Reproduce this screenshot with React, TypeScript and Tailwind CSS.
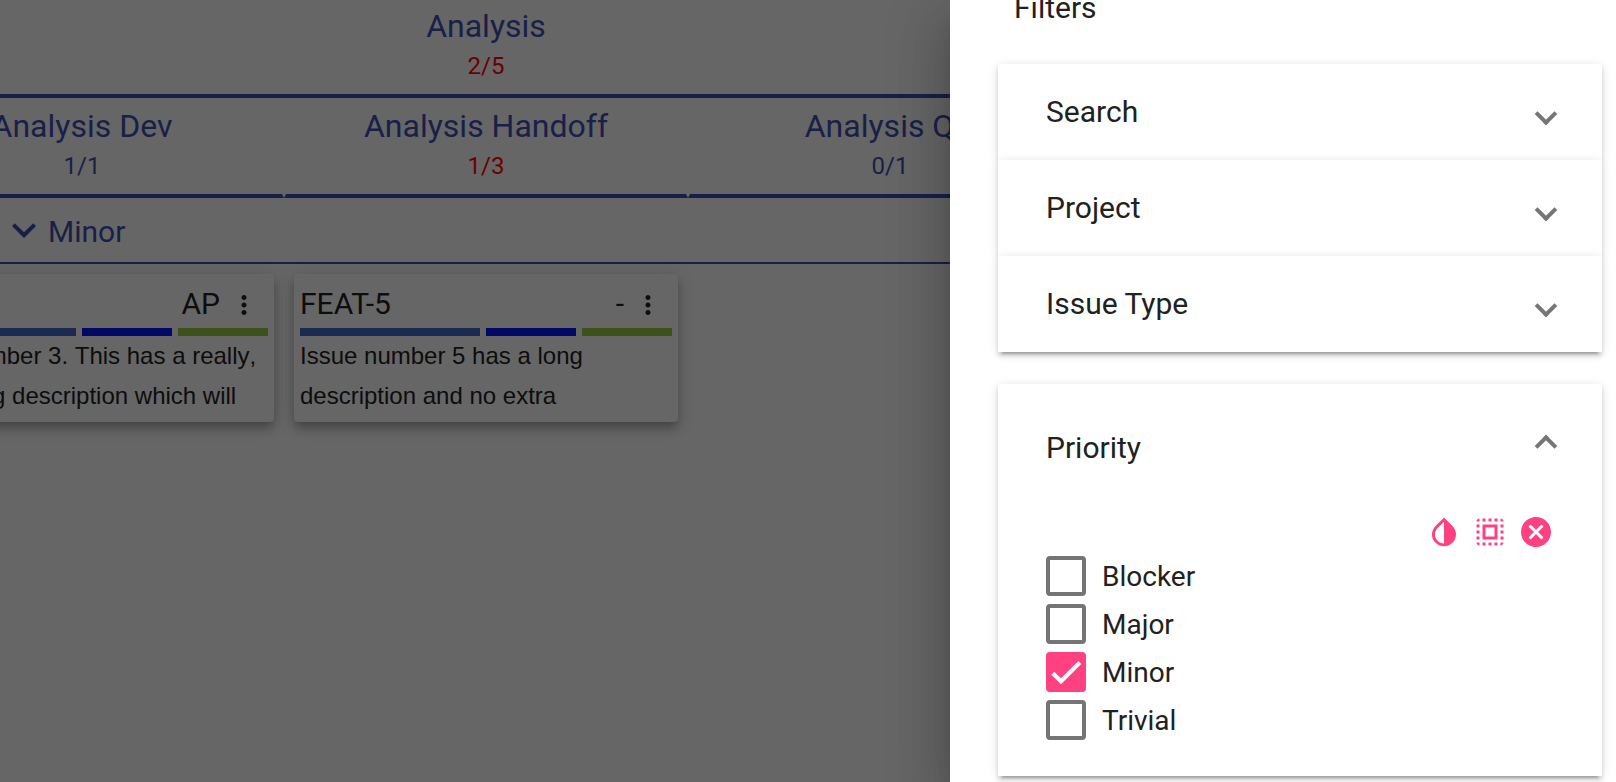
import React from "react";
import { MdCancel, MdMoreVert, MdSelectAll } from "react-icons/md";

type Tone = "ok" | "over";

function StateHeader({ name, count, tone }: { name: string; count: string; tone: Tone }) {
  return (
    <div className="h-[100px] w-full shrink-0 border-x-2 border-b-4 border-x-transparent border-b-[#192048] text-center text-[#192048]">
      <div className="pt-[9px] text-[32px] leading-[38px]">{name}</div>
      <div
        className={
          tone === "over"
            ? "pt-[7px] text-[24px] leading-[28px] text-[#6b0000]"
            : "pt-[7px] text-[24px] leading-[28px]"
        }
      >
        {count}
      </div>
    </div>
  );
}

function IssueCard({ issueKey, assignee, lines }: { issueKey: string; assignee: string; lines: string[] }) {
  return (
    <div className="h-[148px] w-[384px] rounded-[4px] bg-[#666666] px-[6px] text-[#0d0d0d] shadow-[0_4px_8px_-2px_rgba(0,0,0,0.2),0_8px_10px_0_rgba(0,0,0,0.14),0_2px_20px_0_rgba(0,0,0,0.12)]">
      <div className="flex h-[54px] items-center pt-[4px] pr-[9px] text-[30px]">
        <span className="grow">{issueKey}</span>
        <span>{assignee}</span>
        <MdMoreVert className="mt-[4px] ml-[9px] size-[30px]" />
      </div>
      <div className="flex h-[8px] gap-[6px]">
        <div className="w-[180px] bg-[#1c2a50]" />
        <div className="w-[90px] bg-[#020866]" />
        <div className="w-[90px] bg-[#3d521a]" />
      </div>
      <div className="font-['Liberation_Sans',Arial,sans-serif] text-[24px] leading-[40px] whitespace-nowrap [font-kerning:none]">
        {lines.map((line) => (
          <div key={line}>{line}</div>
        ))}
      </div>
    </div>
  );
}

function Board() {
  return (
    <div className="w-[950px] shrink-0 overflow-hidden bg-[#666666]">
      <div className="-ml-[120px] w-[1212px]">
        <div className="-mt-[2px]">
          <StateHeader name="Analysis" count="2/5" tone="over" />
        </div>
        <div className="grid grid-cols-3">
          <StateHeader name="Analysis Dev" count="1/1" tone="ok" />
          <StateHeader name="Analysis Handoff" count="1/3" tone="over" />
          <StateHeader name="Analysis QA" count="0/1" tone="ok" />
        </div>
        <div className="flex h-[66px] items-center border-b-2 border-[#192048] pl-[120px] text-[30px] text-[#192048]">
          <svg viewBox="0 0 24 24" className="size-[48px]" fill="currentColor">
            <path d="M16.59 8.59L12 13.17 7.41 8.59 6 10l6 6 6-6z" />
          </svg>
          <span className="pt-[2px]">Minor</span>
        </div>
        <div className="flex gap-[20px] px-[10px] pt-[10px]">
          <IssueCard
            issueKey="FEAT-3"
            assignee="AP"
            lines={["Issue number 3. This has a really,", "really long description which will"]}
          />
          <IssueCard
            issueKey="FEAT-5"
            assignee="-"
            lines={["Issue number 5 has a long", "description and no extra"]}
          />
        </div>
      </div>
    </div>
  );
}

const PANEL_SHADOW =
  "bg-white shadow-[0_6px_2px_-4px_rgba(0,0,0,0.2),0_4px_4px_0_rgba(0,0,0,0.14),0_2px_10px_0_rgba(0,0,0,0.12)]";

function CollapsedPanel({ title }: { title: string }) {
  return (
    <div className={`${PANEL_SHADOW} flex h-[96px] items-center justify-between pr-[48px] pl-[48px]`}>
      <span className="-mt-[2px] text-[30px]">{title}</span>
      <span className="mt-[3px] size-[16px] rotate-45 border-r-4 border-b-4 border-[#757575]" />
    </div>
  );
}

function Checkbox({ label, checked = false }: { label: string; checked?: boolean }) {
  return (
    <label className="flex h-[48px] items-center gap-[16px] text-[28px]">
      {checked ? (
        <span className="size-[40px] rounded-[4px] bg-[#ff4081]">
          <svg viewBox="0 0 24 24" className="size-[40px]" fill="none" stroke="#fafafa" strokeWidth="2.5">
            <path d="M4.1 12.7L9 17.6 20.3 6.3" />
          </svg>
        </span>
      ) : (
        <span className="size-[40px] rounded-[4px] border-4 border-[#757575]" />
      )}
      <span className="pt-[2px]">{label}</span>
    </label>
  );
}

export default function App() {
  return (
    <div className="flex h-[782px] w-[1616px] overflow-hidden bg-[#666666] font-[Roboto,sans-serif]">
      <Board />
      <aside className="relative w-[666px] shrink-0 bg-white pr-[14px] pl-[48px] text-[#212121] shadow-[0_16px_20px_-10px_rgba(0,0,0,0.2),0_32px_48px_4px_rgba(0,0,0,0.14),0_12px_60px_10px_rgba(0,0,0,0.12)]">
        <h2 className="-mt-[12px] h-[76px] pl-[16px] text-[30px] leading-[40px]">Filters</h2>
        <div>
          <CollapsedPanel title="Search" />
          <CollapsedPanel title="Project" />
          <CollapsedPanel title="Issue Type" />
        </div>
        <section className={`${PANEL_SHADOW} mt-[32px] h-[392px] px-[48px]`}>
          <div className="flex h-[128px] items-center justify-between">
            <span className="-mt-[2px] text-[30px]">Priority</span>
            <span className="-mt-[4px] size-[16px] rotate-[225deg] border-r-4 border-b-4 border-[#757575]" />
          </div>
          <div className="flex h-[40px] items-center justify-end gap-[10px] text-[#ff4081]">
            <svg viewBox="0 0 24 24" className="size-[36px]" fill="currentColor">
              <path d="M17.66 7.93L12 2.27 6.34 7.93c-3.12 3.12-3.12 8.19 0 11.31C7.9 20.8 9.95 21.58 12 21.58c2.05 0 4.1-.78 5.66-2.34 3.12-3.12 3.12-8.19 0-11.31zM12 19.59c-1.6 0-3.11-.62-4.24-1.76C6.62 16.69 6 15.19 6 13.59s.62-3.11 1.76-4.24L12 5.1v14.49z" />
            </svg>
            <MdSelectAll className="size-[36px]" />
            <MdCancel className="size-[36px]" />
          </div>
          <div>
            <Checkbox label="Blocker" />
            <Checkbox label="Major" />
            <Checkbox label="Minor" checked />
            <Checkbox label="Trivial" />
          </div>
        </section>
      </aside>
    </div>
  );
}
